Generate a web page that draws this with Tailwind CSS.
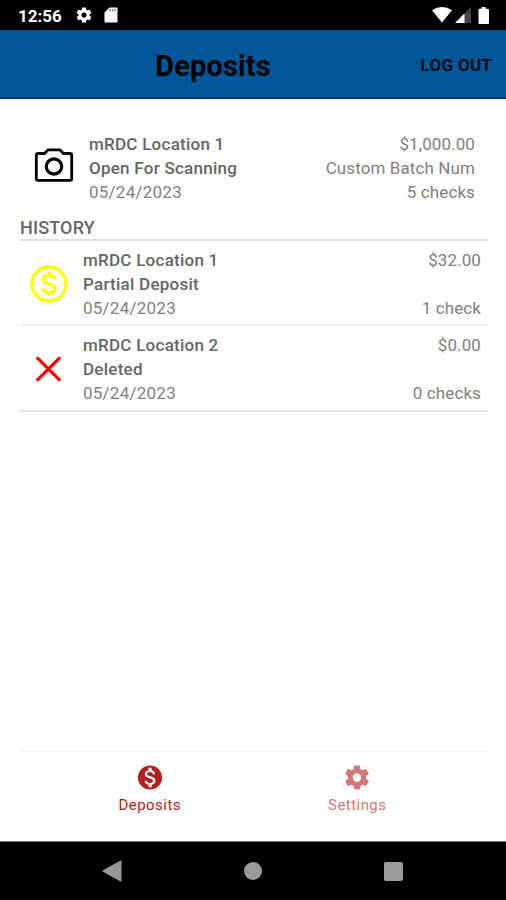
<!DOCTYPE html>
<html lang="en">
<head>
  <meta charset="UTF-8" />
  <meta name="viewport" content="width=device-width, initial-scale=1" />
  <title>Deposits</title>
  <script src="https://cdn.jsdelivr.net/npm/@tailwindcss/browser@4"></script>
</head>

<body class="h-[900px] w-[506px] flex flex-col overflow-hidden bg-white font-[Roboto,sans-serif] text-[#666]">

  <!-- status bar -->
  <div class="h-[30px] shrink-0 bg-black text-white flex items-center justify-between pl-[18px] pr-4">
    <div class="flex items-center">
      <span class="w-[44px] text-[17px] font-bold leading-none pt-[2px]">12:56</span>
      <svg class="ml-[13px] w-[18px] h-[18px]" viewBox="0 0 24 24" fill="currentColor"><path d="M19.43 12.98c.04-.32.07-.64.07-.98s-.03-.66-.07-.98l2.11-1.65c.19-.15.24-.42.12-.64l-2-3.46c-.12-.22-.39-.3-.61-.22l-2.49 1c-.52-.4-1.08-.73-1.69-.98l-.38-2.65C14.46 2.18 14.25 2 14 2h-4c-.25 0-.46.18-.49.42l-.38 2.65c-.61.25-1.17.59-1.69.98l-2.49-1c-.23-.09-.49 0-.61.22l-2 3.46c-.13.22-.07.49.12.64l2.11 1.65c-.04.32-.07.65-.07.98s.03.66.07.98l-2.11 1.65c-.19.15-.24.42-.12.64l2 3.46c.12.22.39.3.61.22l2.49-1c.52.4 1.08.73 1.69.98l.38 2.65c.03.24.24.42.49.42h4c.25 0 .46-.18.49-.42l.38-2.65c.61-.25 1.17-.59 1.69-.98l2.49 1c.23.09.49 0 .61-.22l2-3.46c.12-.22.07-.49-.12-.64l-2.11-1.65zM12 15.5c-1.93 0-3.5-1.57-3.5-3.5s1.57-3.5 3.5-3.5 3.5 1.57 3.5 3.5-1.57 3.5-3.5 3.5z"/></svg>
      <svg class="ml-[11px] w-[14px] h-4" viewBox="0 0 14 16"><path d="M5.5.5H12.5Q13.5.5 13.5 1.5V14.5Q13.5 15.5 12.5 15.5H1.5Q.5 15.5.5 14.5V5.5Z" fill="#fff"/><path d="M6 2v2.500M8.500 2v2.500M11 2v2.500" stroke="#777" stroke-width="1.300"/></svg>
    </div>
    <div class="flex items-center">
      <svg class="w-5 h-4" viewBox="0 0 20 16" fill="#fff"><path d="M0 3.200Q10-3.200 20 3.200L10 15.500Z"/></svg>
      <svg class="ml-[3px] w-4 h-4" viewBox="0 0 16 16"><path d="M0 16L16 0V16Z" fill="#444"/><path d="M0 16L9.500 6.500V16Z" fill="#fff"/></svg>
      <svg class="ml-[7px] w-3 h-[17px]" viewBox="0 0 12 17" fill="#fff"><path d="M3.500 0h4v1.800H10Q11 1.800 11 2.800V16Q11 17 10 17H1.500Q.5 17 .5 16V2.800Q.5 1.800 1.500 1.800H3.500Z"/></svg>
    </div>
  </div>

  <header class="h-[69px] shrink-0 grid grid-cols-[1fr_auto_1fr] items-center bg-[#005696] border-b-2 border-[#00307f] pl-[14px] pr-[14px] pt-1 text-black">
    <h1 class="col-start-2 -translate-x-[40px] pt-px text-[29px] font-bold tracking-[0.1px] leading-none">Deposits</h1>
    <button type="button" class="justify-self-end text-[17px] font-medium tracking-[0.3px] leading-none">LOG OUT</button>
  </header>

  <main class="flex-1 pl-5 pr-[18px] pt-[33px] text-[17px] leading-6 tracking-[0.25px]">
    <section class="flex pl-[14px] pr-[13px]">
      <svg class="w-10 h-[34px] mt-4" viewBox="0 0 40 34" fill="none" stroke="#000" stroke-width="2.800"><path d="M4 5.500H10.500L14.200 1.800H25.800L29.500 5.500H36Q37.700 5.500 37.700 7.200V31Q37.700 32.300 36 32.300H4Q2.300 32.300 2.300 31V7.200Q2.300 5.500 4 5.500Z"/><circle cx="20" cy="18.500" r="7.700" stroke-width="3.200"/></svg>
      <div class="ml-[15px] flex-1">
        <p class="font-medium">mRDC Location 1</p>
        <p class="font-medium">Open For Scanning</p>
        <p class="text-[#808080]">05/24/2023</p>
      </div>
      <div class="text-right text-[#808080] tracking-[0.1px]">
        <p>$1,000.00</p>
        <p>Custom Batch Num</p>
        <p>5 checks</p>
      </div>
    </section>

    <h2 class="mt-3 h-[25px] border-b-2 border-[#e0e0e0] text-[18px] font-medium tracking-[0.15px]">HISTORY</h2>

    <ul>
      <li class="flex h-[85px] pt-[7px] pl-[9px] pr-[7px] border-b-2 border-[#f0f0f0]">
        <svg class="w-[38px] h-[38px] ml-px mt-[17px]" viewBox="0 0 38 38" fill="none" stroke="#ff0" stroke-width="3.300"><circle cx="19" cy="19" r="17"/><path d="M19 7V11M19 27V31M25 14.500Q24 10.500 19 10.500Q13.500 10.500 13.500 14.700Q13.500 17.700 19 19Q25 20.300 25 23.600Q25 27.600 19 27.600Q13.500 27.600 13 23.300"/></svg>
        <div class="ml-[15px] flex-1">
          <p class="font-medium">mRDC Location 1</p>
          <p class="font-medium">Partial Deposit</p>
          <p class="text-[#808080]">05/24/2023</p>
        </div>
        <div class="flex flex-col justify-between h-[72px] text-right text-[#808080] tracking-[0.1px]">
          <p>$32.00</p>
          <p>1 check</p>
        </div>
      </li>
      <li class="flex h-[86px] pt-[7px] pl-[9px] pr-[7px] border-b-2 border-[#e4e4e4]">
        <svg class="w-[38px] h-[38px] ml-px mt-[17px]" viewBox="0 0 38 38" stroke="#f00" stroke-width="3.300"><path d="M6.800 7.300L30.200 30.700M30.200 7.300L6.800 30.700"/></svg>
        <div class="ml-[15px] flex-1">
          <p class="font-medium">mRDC Location 2</p>
          <p class="font-medium">Deleted</p>
          <p class="text-[#808080]">05/24/2023</p>
        </div>
        <div class="flex flex-col justify-between h-[72px] text-right text-[#808080] tracking-[0.1px]">
          <p>$0.00</p>
          <p>0 checks</p>
        </div>
      </li>
    </ul>
  </main>

  <!-- tabs -->
  <nav class="h-[91px] shrink-0 ml-5 mr-[18px] border-t-2 border-[#f8f8f8] pt-[11px] pl-[26px] pr-[27px] grid grid-cols-2 text-[15px] leading-5 tracking-[0.45px]">
    <a class="flex flex-col items-center text-[#b71c20]">
      <svg class="w-[30px] h-[29px]" viewBox="0 0 24 24" fill="currentColor"><path d="M12 2C6.480 2 2 6.480 2 12s4.480 10 10 10 10-4.480 10-10S17.520 2 12 2zm1.410 16.090V20h-2.670v-1.930c-1.710-.36-3.160-1.460-3.270-3.400h1.960c.1 1.050.82 1.870 2.650 1.870 1.960 0 2.400-.98 2.400-1.590 0-.83-.44-1.610-2.670-2.140-2.480-.6-4.180-1.620-4.180-3.670 0-1.720 1.390-2.840 3.110-3.210V4h2.670v1.950c1.860.45 2.790 1.860 2.850 3.390H14.300c-.05-1.110-.64-1.870-2.220-1.870-1.500 0-2.400.68-2.400 1.640 0 .84.65 1.390 2.670 1.910s4.180 1.390 4.180 3.910c-.01 1.830-1.380 2.830-3.120 3.160z"/></svg>
      <span class="mt-[3px]">Deposits</span>
    </a>
    <a class="flex flex-col items-center text-[#d37779]">
      <svg class="w-[30px] h-[29px]" viewBox="0 0 24 24" fill="currentColor"><path d="M19.430 12.980c.04-.32.07-.64.07-.98s-.03-.66-.07-.98l2.110-1.650c.19-.15.24-.42.12-.64l-2-3.460c-.12-.22-.39-.3-.61-.22l-2.490 1c-.52-.4-1.080-.73-1.690-.98l-.38-2.650C14.460 2.180 14.250 2 14 2h-4c-.25 0-.46.18-.49.42l-.38 2.650c-.61.25-1.170.59-1.690.98l-2.490-1c-.23-.09-.49 0-.61.22l-2 3.460c-.13.22-.07.49.12.64l2.110 1.650c-.04.32-.07.65-.07.98s.03.66.07.98l-2.110 1.650c-.19.15-.24.42-.12.64l2 3.460c.12.22.39.3.61.22l2.490-1c.52.4 1.080.73 1.690.98l.38 2.650c.03.24.24.42.49.42h4c.25 0 .46-.18.49-.42l.38-2.650c.61-.25 1.170-.59 1.690-.98l2.490 1c.23.09.49 0 .61-.22l2-3.460c.12-.22.07-.49-.12-.64l-2.110-1.650zM12 15.500c-1.930 0-3.500-1.570-3.500-3.500s1.570-3.500 3.500-3.500 3.500 1.570 3.500 3.500-1.570 3.500-3.500 3.500z"/></svg>
      <span class="mt-[3px]">Settings</span>
    </a>
  </nav>

  <!-- android navigation -->
  <footer class="h-[59px] shrink-0 bg-black border-t border-[#777] flex items-center justify-between pl-[102px] pr-[103px]">
    <svg class="w-5 h-[22px]" viewBox="0 0 20 22" fill="#999"><path d="M1 10.200L18 .8Q19.500 0 19.500 1.500V20.500Q19.500 22 18 21.200L1 11.800Q0 11 1 10.200Z"/></svg>
    <div class="w-[18px] h-[18px] rounded-full bg-[#999]"></div>
    <div class="w-[19px] h-[19px] rounded-[2px] bg-[#999]"></div>
  </footer>
</body>
</html>
